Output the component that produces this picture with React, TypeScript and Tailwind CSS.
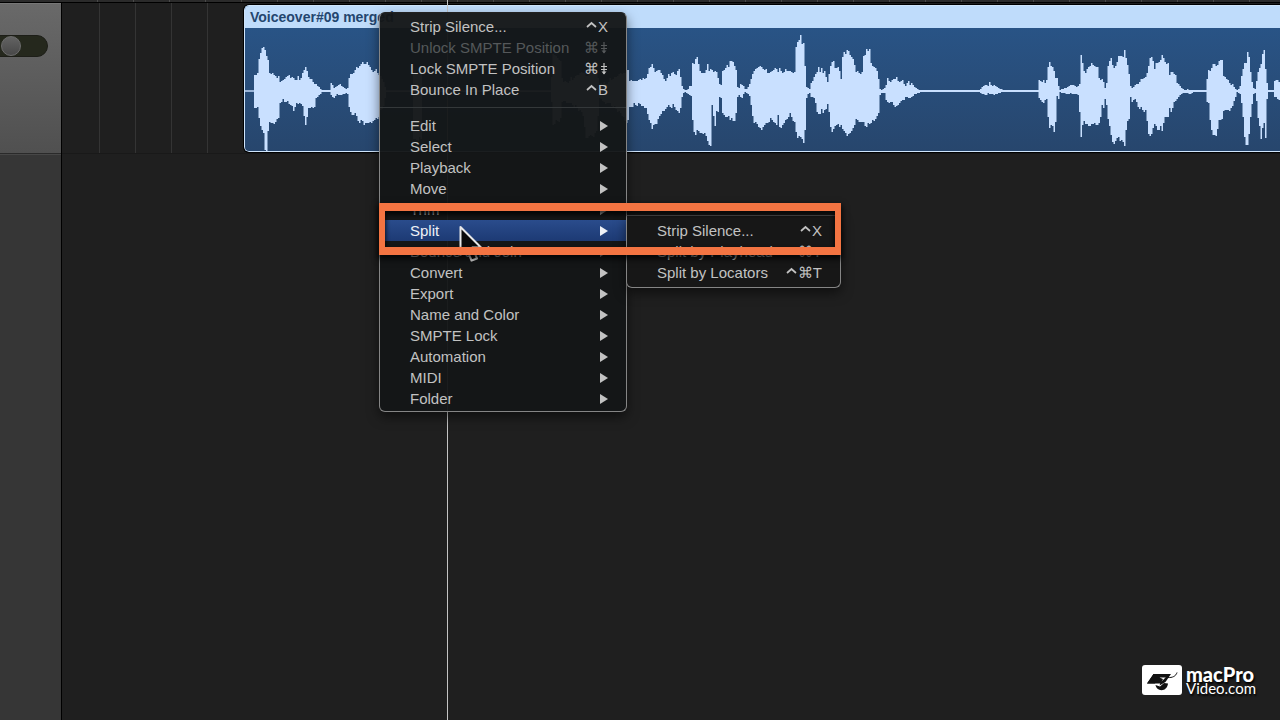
import React from "react";

type Column = [number, number, number];

// Peaks of the recorded take. Each column is [thirds of a pixel from `start`, top, bottom].
const CENTER = 91;
const takes: { start: number; columns: Column[] }[] = [
  {
    start: 240,
    columns: [
      [44, 91, 92], [45, 73, 107], [54, 72, 108], [55, 60, 114], [62, 60, 124], [63, 52, 126], [68, 47, 130], [74, 47, 138], [75, 48, 151], [84, 60, 151], [85, 61, 134], [88, 62, 130], [89, 74, 123],
      [98, 73, 123], [108, 73, 122], [112, 77, 120], [119, 78, 119], [122, 81, 100], [135, 79, 103], [140, 77, 101], [150, 76, 106], [155, 78, 104], [163, 76, 110], [170, 79, 103], [175, 77, 106], [183, 80, 101], [187, 74, 108], [192, 72, 111], [196, 67, 125], [201, 68, 124], [205, 77, 110],
      [215, 79, 107], [226, 81, 107], [230, 84, 98], [238, 87, 95], [248, 90, 92], [272, 90, 92], [273, 83, 95], [278, 84, 95], [281, 88, 100], [285, 88, 97], [292, 86, 94], [300, 84, 95], [312, 87, 94], [320, 89, 93], [327, 88, 94], [328, 78, 106],
      [333, 74, 112], [340, 70, 115], [347, 69, 114], [355, 67, 121], [362, 65, 123], [369, 62, 122], [376, 65, 125], [384, 62, 124], [392, 67, 122], [402, 69, 121], [415, 72, 119], [430, 80, 108], [440, 91, 92],
      [520, 91, 92], [522, 72, 140], [545, 70, 140], [548, 91, 92], [840, 91, 92],
      [935, 91, 92], [938, 52, 125], [965, 62, 120], [968, 82, 100], [1000, 78, 105], [1030, 72, 115], [1040, 74, 138], [1070, 70, 135], [1080, 84, 100], [1110, 80, 104], [1155, 72, 118],
    ],
  },
  {
    start: 620,
    columns: [
      [20, 67, 123], [27, 69, 120], [28, 77, 110], [31, 85, 107], [34, 79, 107], [45, 81, 106], [60, 80, 105], [70, 78, 106], [80, 75, 108], [88, 70, 121], [93, 66, 123], [98, 63, 129], [103, 69, 128], [108, 73, 123], [113, 70, 123], [122, 71, 116], [128, 75, 111], [138, 78, 109], [146, 76, 106], [155, 73, 107], [160, 72, 107], [168, 75, 108], [172, 74, 111], [177, 68, 116], [182, 75, 110],
      [186, 80, 104], [188, 88, 95], [195, 90, 92], [204, 90, 93], [208, 86, 95], [215, 86, 96], [217, 62, 122], [222, 65, 124], [224, 64, 136], [230, 57, 133], [235, 59, 132], [238, 68, 132], [245, 73, 133], [255, 70, 133], [260, 69, 137], [265, 64, 144], [268, 70, 145], [275, 68, 145], [277, 70, 108], [281, 74, 108], [283, 69, 126], [287, 71, 125], [290, 71, 112], [295, 78, 115], [298, 80, 103], [300, 84, 97], [305, 85, 98],
      [309, 69, 112], [315, 66, 116], [320, 67, 119], [328, 65, 116], [332, 60, 120], [340, 62, 122], [345, 66, 120], [350, 71, 115], [352, 86, 98], [358, 88, 95], [363, 84, 97], [369, 82, 98], [373, 88, 93], [378, 90, 92], [383, 88, 93], [390, 84, 96], [396, 77, 112], [402, 71, 122], [412, 69, 125], [418, 66, 127], [425, 65, 129], [432, 67, 126], [440, 71, 124], [450, 73, 121], [460, 70, 120],
      [468, 68, 126], [475, 71, 126], [476, 71, 104], [479, 70, 104], [480, 68, 127],
    ],
  },
  {
    start: 780,
    columns: [
      [10, 71, 125], [20, 70, 121], [30, 70, 115], [39, 73, 119], [47, 72, 126], [48, 50, 132], [53, 42, 138], [60, 40, 135], [63, 33, 136], [66, 42, 134], [69, 41, 143], [73, 42, 144], [75, 64, 136], [80, 76, 120], [81, 87, 98], [87, 88, 93], [92, 90, 93], [94, 83, 97], [100, 81, 97], [106, 76, 99], [110, 73, 110], [118, 66, 115], [122, 71, 112], [126, 65, 109], [128, 72, 115], [138, 72, 110], [142, 81, 106], [147, 83, 99],
      [149, 71, 120], [155, 63, 131], [161, 60, 132], [166, 69, 128], [169, 67, 126], [176, 67, 124], [177, 67, 101], [179, 67, 101], [180, 69, 126], [186, 79, 125], [187, 56, 128], [195, 53, 133], [201, 52, 133], [204, 47, 138], [208, 53, 136], [216, 57, 130], [224, 62, 130], [227, 72, 119], [235, 71, 120], [248, 71, 123], [251, 58, 123], [257, 53, 126], [259, 46, 126], [264, 53, 126], [268, 47, 125], [272, 50, 125], [275, 65, 122], [284, 68, 122],
      [290, 67, 118], [297, 77, 112], [298, 87, 98], [303, 90, 93], [315, 88, 93], [320, 85, 100], [322, 75, 104], [326, 80, 106], [332, 83, 101], [338, 80, 104], [344, 80, 107], [349, 76, 107], [355, 79, 104], [363, 79, 102], [372, 82, 101], [380, 87, 96], [385, 79, 98], [390, 85, 98], [397, 83, 97], [405, 87, 94], [415, 89, 93], [422, 90, 92],
    ],
  },
  {
    start: 940,
    columns: [
      [120, 90, 92], [122, 89, 93], [132, 86, 94], [140, 85, 95], [146, 86, 93], [151, 82, 94], [156, 86, 94], [165, 85, 95], [175, 88, 93], [190, 90, 92], [294, 90, 92], [296, 83, 95], [301, 79, 100], [308, 82, 101], [312, 80, 106], [319, 85, 98], [323, 74, 100], [326, 67, 123], [332, 60, 132], [335, 66, 124], [342, 67, 128], [346, 71, 135], [349, 77, 115], [352, 75, 95], [356, 84, 104], [359, 90, 92],
      [370, 89, 93], [385, 87, 94], [393, 85, 93], [402, 85, 94], [412, 87, 94], [418, 85, 95], [420, 84, 112], [424, 54, 137], [428, 56, 135], [430, 70, 120], [438, 73, 123], [444, 69, 127], [450, 66, 127], [457, 62, 123], [465, 63, 123], [473, 67, 127], [480, 79, 122], [487, 79, 108], [493, 82, 109], [497, 89, 97], [502, 82, 110], [506, 64, 122], [510, 60, 126],
    ],
  },
  {
    start: 1110,
    columns: [
      [4, 57, 134], [8, 62, 140], [13, 65, 144], [20, 64, 141], [25, 62, 138], [27, 55, 137], [36, 56, 143], [41, 57, 143], [44, 48, 148], [48, 56, 136], [54, 66, 122], [61, 78, 118], [63, 86, 97], [68, 88, 101], [76, 85, 99], [86, 82, 107], [96, 79, 110], [106, 78, 112], [112, 77, 112], [113, 70, 133], [120, 61, 135], [123, 54, 136], [130, 57, 128], [135, 68, 125], [143, 62, 130], [153, 60, 129], [158, 54, 132], [163, 59, 120], [169, 66, 118], [175, 61, 118], [180, 75, 108], [187, 67, 112], [192, 72, 103], [198, 76, 102],
      [201, 83, 100], [210, 85, 96], [218, 89, 93], [228, 90, 93], [235, 89, 93], [242, 90, 94], [250, 90, 92], [290, 90, 92], [292, 79, 102], [298, 68, 103], [303, 69, 125], [309, 61, 135], [313, 66, 136], [320, 65, 136], [325, 64, 126], [330, 60, 122], [339, 60, 117], [341, 77, 113], [350, 78, 110], [360, 81, 110], [370, 84, 106], [377, 89, 98], [381, 90, 92], [391, 89, 93], [393, 77, 98], [399, 74, 106], [402, 65, 133], [409, 63, 145], [414, 52, 145], [417, 49, 140], [420, 61, 125],
      [426, 78, 108], [430, 84, 98], [433, 90, 92], [438, 89, 93], [440, 82, 96], [446, 71, 123], [452, 67, 128], [456, 62, 144], [460, 52, 125], [464, 50, 124], [467, 63, 142], [470, 80, 130], [472, 82, 100], [477, 90, 92], [492, 90, 92], [494, 80, 97], [500, 79, 97], [510, 82, 101],
    ],
  },
];

const peaks: Column[] = takes.flatMap((t) =>
  t.columns.map(([u, top, bottom]): Column => [t.start + u / 3, top, bottom]),
);

const WOBBLE = [0, 2, -1, 1, 3, 0, -2, 1, 0, 4, -1, 2, 0];
function sample(x: number, side: 1 | 2) {
  const next = peaks.findIndex((p) => p[0] >= x);
  if (next < 0) return peaks[peaks.length - 1][side];
  if (next === 0) return CENTER;
  const a = peaks[next - 1];
  const b = peaks[next];
  return a[side] + ((b[side] - a[side]) * (x - a[0])) / Math.max(b[0] - a[0], 0.01);
}
const bars = Array.from({ length: 691 }, (_, i) => {
  const x = 245 + i * 1.5;
  const rawTop = sample(x + 1, 1);
  const rawBottom = sample(x + 1, 2);
  const top = Math.round(rawTop + (CENTER - rawTop > 8 ? WOBBLE[(i * 5) % 13] * 0.7 : 0));
  const bottom = Math.round(rawBottom - (rawBottom - CENTER > 8 ? WOBBLE[(i * 7 + 3) % 13] * 0.7 : 0));
  return `M${x} ${top}h1.5V${bottom}h-1.5Z`;
}).join("");

function Waveform() {
  return (
    <svg viewBox="245 28 1035 123" className="h-[123px] w-[1035px] shrink-0" aria-hidden="true">
      <rect x="245" y={CENTER - 1} width="1035" height="2" fill="#c9e0ff" fillOpacity="0.7" />
      <path d={bars} fill="#c9e0ff" />
    </svg>
  );
}

type Item = { label: string; keys?: string; caret?: boolean; page?: boolean; sub?: boolean; disabled?: boolean; active?: boolean };

const commands: Item[] = [
  { label: "Strip Silence...", caret: true, keys: "X" },
  { label: "Unlock SMPTE Position", keys: "⌘", page: true, disabled: true },
  { label: "Lock SMPTE Position", keys: "⌘", page: true },
  { label: "Bounce In Place", caret: true, keys: "B" },
];

const groups: Item[] = [
  "Edit", "Select", "Playback", "Move", "Trim", "Split", "Bounce and Join", "Convert",
  "Export", "Name and Color", "SMPTE Lock", "Automation", "MIDI", "Folder",
].map((label) => ({ label, sub: true, active: label === "Split" }));

const splitItems: Item[] = [
  { label: "Strip Silence...", caret: true, keys: "X" },
  { label: "Split by Playhead", keys: "⌘T" },
  { label: "Split by Locators", caret: true, keys: "⌘T" },
];

function MenuItem({ item }: { item: Item }) {
  const tone = item.disabled
    ? "text-[#55585a]"
    : item.active
      ? "bg-linear-to-b from-[#2a4c8c] to-[#1d3a74] text-[#eef1f6]"
      : "text-[#c2c2c2]";
  return (
    <button
      type="button"
      role="menuitem"
      disabled={item.disabled}
      aria-haspopup={item.sub ? "menu" : undefined}
      className={`flex h-[21px] w-full items-center justify-between pr-[18px] pl-[30px] text-[15px] leading-[21px] whitespace-nowrap ${tone}`}
    >
      <span>{item.label}</span>
      {item.sub ? (
        <svg viewBox="0 0 8 10" className="h-[10px] w-2" fill="currentColor" aria-hidden="true">
          <path d="M0 0L8 5L0 10Z" />
        </svg>
      ) : (
        <span className="flex items-center gap-px">
          {item.caret && (
            <svg viewBox="0 0 11 12" className="h-3 w-[11px]" fill="none" stroke="currentColor" strokeWidth="1.7" aria-label="Control">
              <path d="M1 6L5.500 2L10 6" />
            </svg>
          )}
          <span>{item.keys}</span>
          {item.page && (
            <svg viewBox="0 0 8 12" className="h-3 w-2" fill="none" stroke="currentColor" strokeWidth="1.2" aria-label="Page Down">
              <path d="M4 0V11M1 3.500H7M1 6.500H7" />
              <path d="M1.500 8.500H6.500L4 11.500Z" fill="currentColor" stroke="none" />
            </svg>
          )}
        </span>
      )}
    </button>
  );
}

function Logo() {
  return (
    <div className="absolute right-6 bottom-[25px] flex items-center gap-1 text-white">
      <svg viewBox="0 0 40 30" className="h-[30px] w-10" aria-hidden="true">
        <rect width="40" height="30" rx="3" fill="#fff" />
        <path d="M11.500 9H29L23.500 17L17.500 20.500L18.500 17.500L24 12H17L13 18.500H5Z" fill="#111" />
        <path d="M5 18.500L11.500 9H28L24 12.500H17.500L21 14L19 18.500Z" fill="#111" />
        <path d="M13.500 20L18 21.500L22 18L26 18.500C25.500 22.500 23 25.200 19.500 25.200C16.500 25.200 14 23 13.500 20Z" fill="#111" />
        <path d="M25.500 12.500C30.500 13 34 11 35 7.500" fill="none" stroke="#111" strokeWidth="1" />
      </svg>
      <div className="font-[Lato] [text-shadow:1px_2px_2px_#000]">
        <div className="text-[20px] leading-[16px] font-black">macPro</div>
        <div className="text-[15px] leading-[13px]">Video.com</div>
      </div>
    </div>
  );
}

export default function App() {
  return (
    <div className="relative flex min-h-screen flex-col overflow-hidden bg-[#1f1f1f] font-['Liberation_Sans',Arial,sans-serif]">
      <div className="flex h-[3px] border-b border-black bg-[#2b2b2b] pl-[62px]">
        {Array.from({ length: 34 }, (_, i) => (
          <span key={i} className="w-9 shrink-0 border-r border-[#4a4a4a]" />
        ))}
      </div>

      <div className="flex flex-1">
        <aside className="flex w-[62px] shrink-0 flex-col overflow-hidden border-r border-black bg-[#363636]">
          <div className="h-[150px] border-t border-[#777] bg-linear-to-b from-[#696969] to-[#505050] pt-[31px]">
            <input
              type="range"
              aria-label="Track volume"
              defaultValue={44}
              className="-ml-5 block h-[22px] w-[68px] appearance-none rounded-full border border-[#1d1e18] bg-[#25281d] [&::-webkit-slider-thumb]:size-5 [&::-webkit-slider-thumb]:appearance-none [&::-webkit-slider-thumb]:rounded-full [&::-webkit-slider-thumb]:border [&::-webkit-slider-thumb]:border-[#6c6c6c] [&::-webkit-slider-thumb]:bg-linear-to-b [&::-webkit-slider-thumb]:from-[#636363] [&::-webkit-slider-thumb]:to-[#484848]"
            />
          </div>
          <div className="h-px bg-[#2a2a2a]" />
          <div className="h-px bg-[#474747]" />
        </aside>

        <main className="flex min-w-0 flex-1 flex-col">
          <div className="flex h-[151px] border-b border-[#191919]">
            <div className="flex w-[181px] shrink-0">
              <span className="w-[38px] border-r border-[#343434]" />
              <span className="w-9 border-r border-[#343434]" />
              <span className="w-9 border-r border-[#343434]" />
              <span className="w-9 border-r border-[#343434]" />
            </div>
            <section className="mt-px flex min-w-0 flex-1 flex-col overflow-hidden rounded-l-md border border-r-0 border-black">
              <div className="flex flex-1 flex-col overflow-hidden rounded-l-[5px] border border-r-0 border-[#cfe5fb] bg-linear-to-b from-[#29568a] to-[#27466d]">
                <h2 className="h-[22px] shrink-0 bg-[#bfdcfb] pl-[5px] text-[14px] leading-[22px] font-bold text-[#24466f]">
                  Voiceover#09 merged
                </h2>
                <Waveform />
              </div>
            </section>
          </div>
        </main>
      </div>

      <div className="absolute inset-y-0 left-[447px] w-px bg-[#c4c4c4]" />

      <div
        role="menu"
        aria-label="Region"
        className="absolute top-3 left-[379px] w-[248px] rounded-md border border-[#858585] border-t-[#222] bg-[#141617]/96 pt-[3px] pb-0.5 shadow-[0_5px_12px_rgba(0,0,0,0.5)]"
      >
        {commands.map((item) => (
          <MenuItem key={item.label} item={item} />
        ))}
        <div className="flex h-[15px] flex-col justify-center">
          <div className="h-px bg-[#34383a]" />
        </div>
        {groups.map((item) => (
          <MenuItem key={item.label} item={item} />
        ))}
      </div>

      <div
        role="menu"
        aria-label="Split"
        className="absolute top-[215px] left-[626px] w-[215px] rounded-r-md rounded-bl-md border border-[#858585] border-t-[#555] bg-[#171717] py-1 shadow-[0_5px_12px_rgba(0,0,0,0.5)]"
      >
        {splitItems.map((item) => (
          <MenuItem key={item.label} item={item} />
        ))}
      </div>

      <svg viewBox="0 0 24 38" className="absolute top-[225px] left-[459px] h-[38px] w-6" aria-hidden="true">
        <path d="M1.500 2V30L8 24.500L12.500 35.500L18 33.500L13.500 22.500H22Z" fill="#0a0a0a" stroke="#e8e8e8" strokeWidth="2" strokeLinejoin="round" />
      </svg>

      <div className="pointer-events-none absolute top-[203px] left-[379px] h-[52px] w-[462px] border-x-[6px] border-y-[8px] border-[#f37442] shadow-[0_3px_6px_1px_rgba(0,0,0,0.8),inset_0_3px_4px_1px_rgba(0,0,0,0.75)]" />

      <Logo />
    </div>
  );
}
